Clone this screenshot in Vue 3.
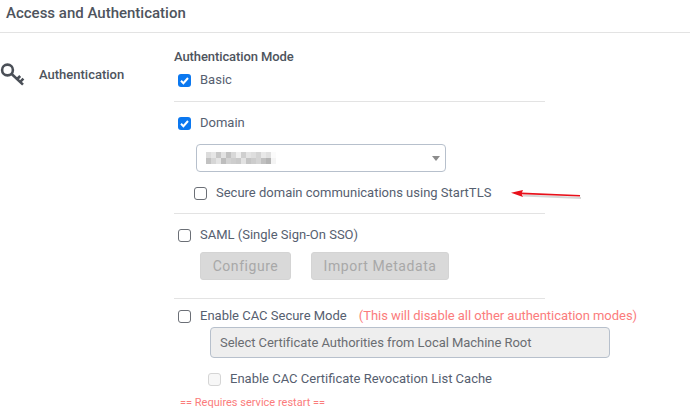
<script setup>
const pixels = [
  '#dcdcdc','#e6e6e6','#c8c8c8','#e2e2e2','#c2c2c2','#d8d8d8','#eeeeee','#cfcfcf','#e4e4e4','#dedede','#d4d4d4','#e8e8e8','#e0e0e0','#fbfbfb',
  '#c2c2c2','#d6d6d6','#e4e4e4','#bdbdbd','#d2d2d2','#cdcdcd','#c9c9c9','#e2e2e2','#c4c4c4','#cccccc','#d4d4d4','#c0c0c0','#b4b4b4','#f4f4f4'
]
</script>

<template>
  <div class="page">
    <header class="title">Access and Authentication</header>
    <div class="content">
      <aside class="side">
        <svg class="key" viewBox="0 0 25 24" width="25" height="24">
          <circle cx="7.5" cy="8" r="5.4" fill="none" stroke="#4a4f57" stroke-width="2.6"/>
          <path d="M11.4 11.8 L23 22.6 M17.2 17 L20.2 14 M20.2 19.8 L23.4 16.6" fill="none" stroke="#4a4f57" stroke-width="2.6"/>
        </svg>
        <span class="side-label">Authentication</span>
      </aside>
      <main class="form">
        <div class="mode">Authentication Mode</div>
        <label class="row basic"><span class="cb on"><svg viewBox="0 0 13 13"><path d="M3 6.8 L5.4 9.2 L10 4" fill="none" stroke="#fff" stroke-width="2"/></svg></span>Basic</label>
        <hr class="rule rule-a" />
        <label class="row domain"><span class="cb on"><svg viewBox="0 0 13 13"><path d="M3 6.8 L5.4 9.2 L10 4" fill="none" stroke="#fff" stroke-width="2"/></svg></span>Domain</label>
        <div class="select">
          <div class="masked">
            <i v-for="(p, n) in pixels" :key="n" :style="{ background: p }"></i>
          </div>
          <span class="caret"></span>
        </div>
        <label class="row tls"><span class="cb"></span>Secure domain communications using StartTLS
          <svg class="arrow" viewBox="0 0 74 16" width="74" height="16">
            <path d="M12 10.5 L70 13" stroke="#bdbdbd" stroke-width="2" opacity=".6"/>
            <path d="M10 8.4 L69 10.8" stroke="#e8101a" stroke-width="1.6"/>
            <path d="M0 7.8 L12 5 L10.5 8.5 L12 12 Z" fill="#e8101a"/>
          </svg>
        </label>
        <hr class="rule rule-b" />
        <label class="row saml"><span class="cb"></span>SAML (Single Sign-On SSO)</label>
        <div class="buttons">
          <button class="btn configure" disabled>Configure</button>
          <button class="btn import" disabled>Import Metadata</button>
        </div>
        <hr class="rule rule-c" />
        <label class="row cac"><span class="cb"></span>Enable CAC Secure Mode<span class="warn">(This will disable all other authentication modes)</span></label>
        <div class="cert">Select Certificate Authorities from Local Machine Root</div>
        <label class="row cache"><span class="cb off"></span>Enable CAC Certificate Revocation List Cache</label>
        <div class="restart">== Requires service restart ==</div>
      </main>
    </div>
  </div>
</template>

<style scoped>
.page {
  width: 690px;
  height: 418px;
  overflow: hidden;
  background: #fff;
  font-family: Roboto, "Liberation Sans", sans-serif;
  font-size: 13px;
  color: #566070;
}
.title {
  height: 33px;
  box-sizing: border-box;
  padding: 4px 0 0 6px;
  font-size: 15px;
  line-height: 18px;
  font-weight: 500;
  color: #4e545d;
  border-bottom: 1px solid #e3e3e3;
}
.content { display: flex; }
.side {
  width: 174px;
  flex: none;
  display: flex;
  align-items: flex-start;
  padding-top: 29px;
  box-sizing: border-box;
}
.key { flex: none; margin-right: 14px; }
.side-label { font-weight: 500; line-height: 24px; color: #4e545d; padding-top: 1px; }
.form { width: 371px; flex: none; }
.mode {
  margin-top: 15px;
  height: 18px;
  line-height: 18px;
  font-weight: 500;
  letter-spacing: -.1px;
  color: #4e545d;
}
.row {
  display: flex;
  align-items: center;
  height: 16px;
  line-height: 16px;
  white-space: nowrap;
}
.cb {
  width: 13px;
  height: 13px;
  flex: none;
  box-sizing: border-box;
  border: 1px solid #6b6f76;
  border-radius: 3px;
  background: #fff;
  margin-right: 9px;
}
.cb svg { display: block; width: 13px; height: 13px; }
.cb.on { background: #0b78f0; border: 0; }
.cb.off { border-color: #d5d5d5; background: #f7f7f7; }
.basic { margin: 6px 0 0 4px; }
.rule { border: 0; border-top: 1px solid #e3e3e3; margin: 0; }
.rule-a { margin-top: 13px; }
.domain { margin: 13px 0 0 4px; }
.select {
  margin: 13px 0 0 22px;
  width: 250px;
  height: 28px;
  box-sizing: border-box;
  border: 1px solid #b7c0cc;
  border-radius: 4px;
  display: flex;
  align-items: center;
  justify-content: space-between;
  padding: 0 5px 0 9px;
}
.masked {
  display: grid;
  grid-template-columns: repeat(14, 5px);
  grid-auto-rows: 6px;
  filter: blur(.6px);
}
.masked i { display: block; }
.caret {
  width: 0;
  height: 0;
  border-left: 4px solid transparent;
  border-right: 4px solid transparent;
  border-top: 5px solid #8c8c8c;
}
.tls { margin: 13px 0 0 20px; position: relative; }
.arrow { position: absolute; left: 317px; top: 0; }
.rule-b { margin-top: 12px; }
.saml { margin: 13px 0 0 4px; }
.buttons { display: flex; gap: 20px; margin: 9px 0 0 26px; }
.btn {
  height: 28px;
  padding: 0;
  border: 1px solid #d4d4d4;
  border-radius: 3px;
  background: #d9d9d9;
  color: #a8a8a8;
  font: 400 14px Roboto, "Liberation Sans", sans-serif;
  letter-spacing: .55px;
}
.configure { width: 91px; }
.import { width: 138px; }
.rule-c { margin-top: 18px; }
.cac { margin: 9px 0 0 4px; }
.warn { color: #fb7c7c; margin-left: 12px; letter-spacing: -.04px; }
.cert {
  margin: 3px 0 0 36px;
  width: 400px;
  height: 31px;
  box-sizing: border-box;
  border: 1px solid #b7c0cc;
  border-radius: 4px;
  background: #eeeeee;
  padding-left: 9px;
  line-height: 29px;
  color: #6a6d72;
  letter-spacing: -.05px;
}
.cache { margin: 13px 0 0 34px; }
.restart {
  margin: 9px 0 0 6px;
  font-size: 11px;
  line-height: 14px;
  color: #fb7c7c;
  white-space: nowrap;
}
</style>
